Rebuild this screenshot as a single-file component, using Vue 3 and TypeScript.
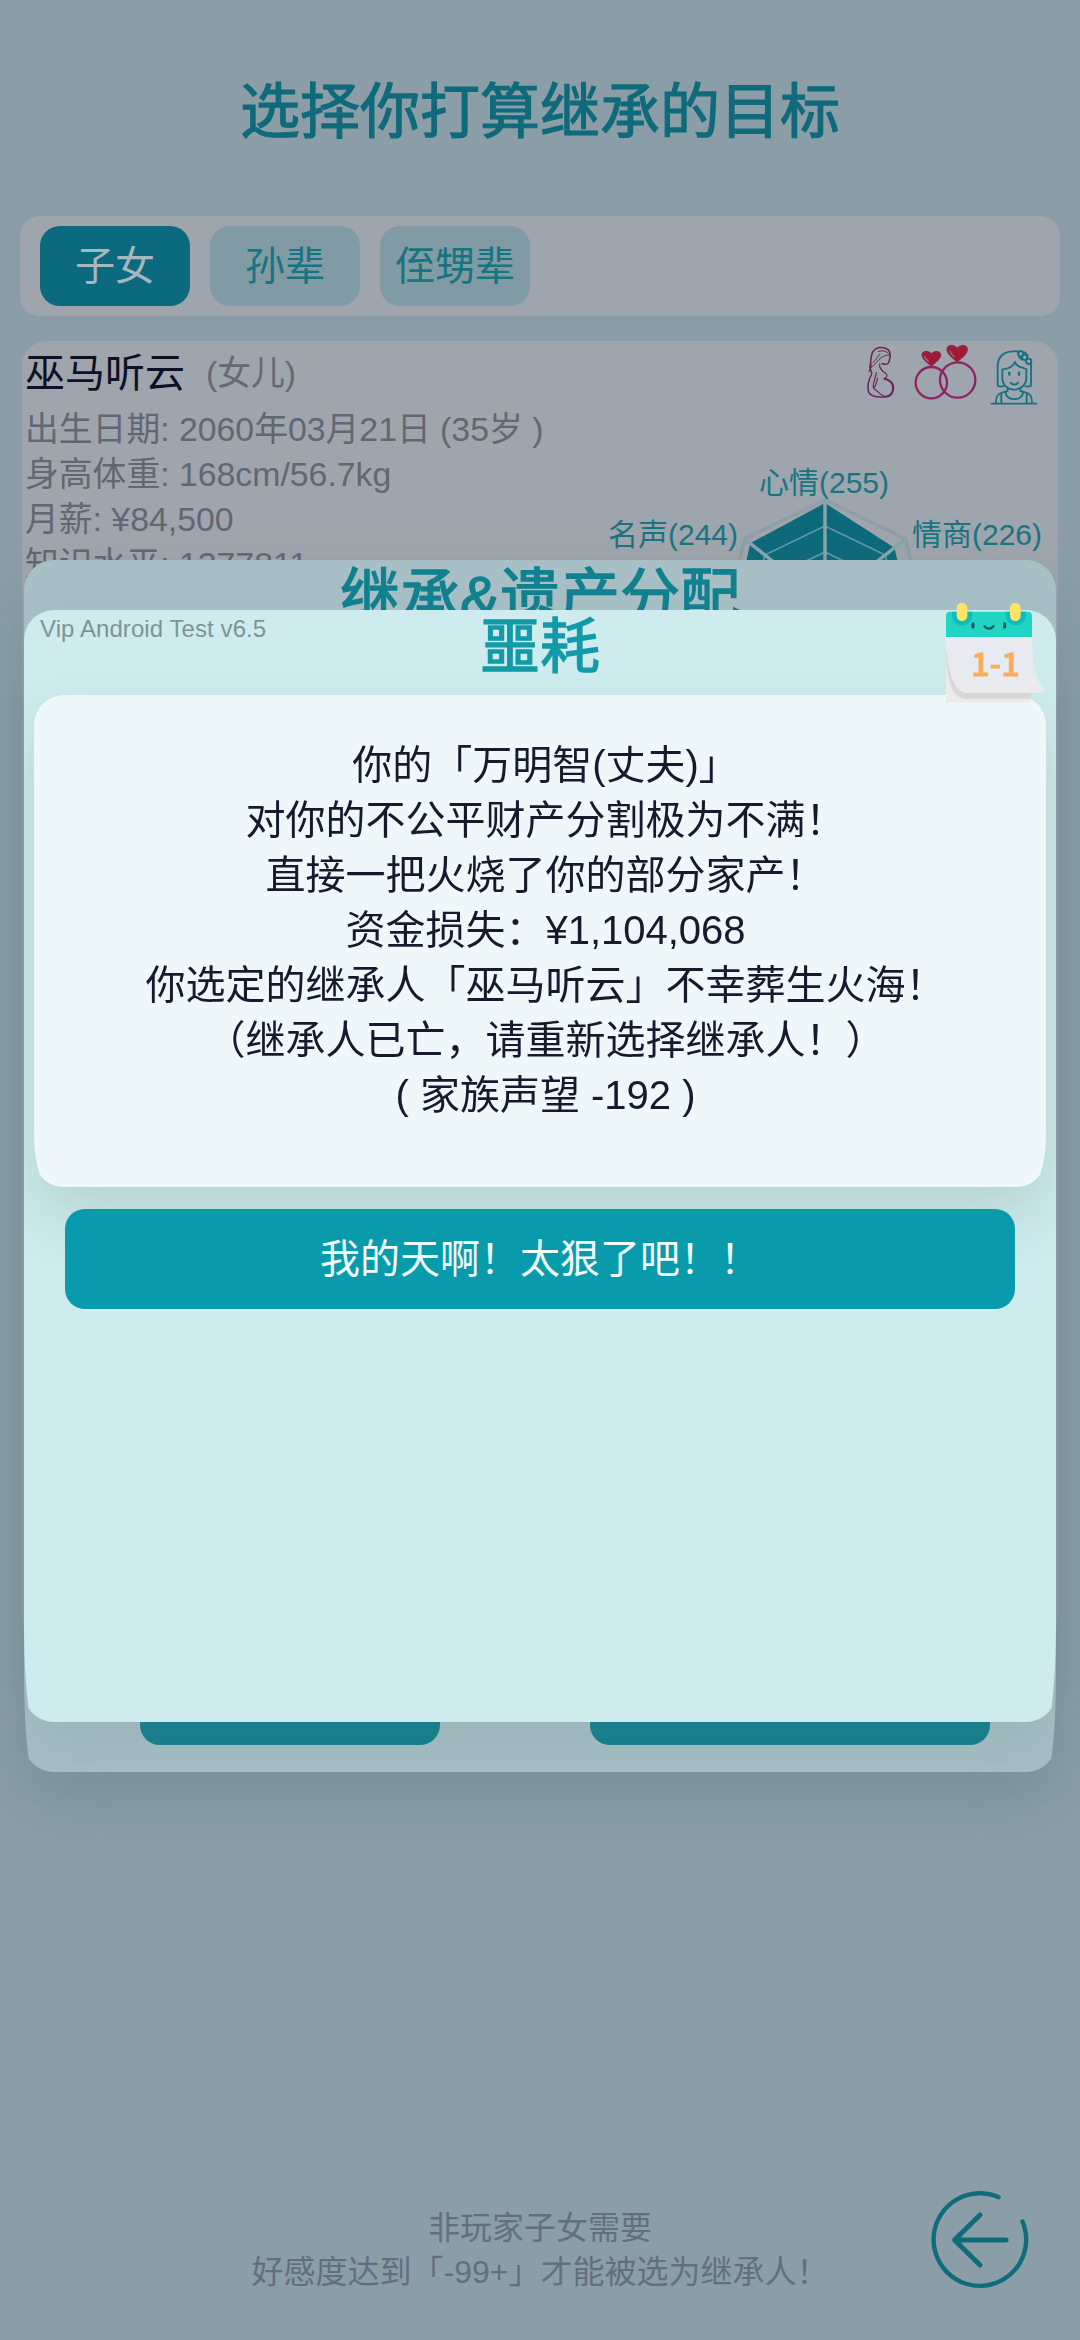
<script setup lang="ts">
interface Stat {
  label: string
  value: number
  x: number
  y: number
}

const tabs: string[] = ['子女', '孙辈', '侄甥辈']
const activeTab = 0

const facts: string[] = [
  '出生日期: 2060年03月21日 (35岁 )',
  '身高体重: 168cm/56.7kg',
  '月薪: ¥84,500',
  '知识水平: 1377811',
]

const message: string[] = [
  '你的「万明智(丈夫)」',
  '对你的不公平财产分割极为不满！',
  '直接一把火烧了你的部分家产！',
  '资金损失：¥1,104,068',
  '你选定的继承人「巫马听云」不幸葬生火海！',
  '（继承人已亡，请重新选择继承人！）',
  '( 家族声望 -192 )',
]

const radius = 103
const center = { x: 225, y: 143 }
const values: number[] = [255, 226, 230, 235, 230, 240, 244]
const stats: Stat[] = [
  { label: '心情', value: 255, x: 224, y: 33 },
  { label: '名声', value: 244, x: 73, y: 85 },
  { label: '情商', value: 226, x: 377, y: 85 },
]

function point(i: number, r: number): [number, number] {
  const a = (i * 2 * Math.PI) / 7
  return [center.x + r * Math.sin(a), center.y - r * Math.cos(a)]
}
function ring(r: number): string {
  return values.map((_, i) => point(i, r).map((n) => n.toFixed(1)).join(',')).join(' ')
}
const rings: string[] = [26, 51, 77].map(ring)
const outer = ring(radius)
const area = values
  .map((v, i) => point(i, (v / 255) * 100).map((n) => n.toFixed(1)).join(','))
  .join(' ')
const spokes = values.map((_, i) => point(i, radius))
</script>

<template>
  <div class="screen">
    <h1 class="page-title">选择你打算继承的目标</h1>

    <nav class="tabs">
      <button v-for="(t, i) in tabs" :key="t" class="tab" :class="{ active: i === activeTab }">{{ t }}</button>
    </nav>

    <section class="person-clip">
      <article class="person">
        <header class="person-head">
          <span class="name">巫马听云</span>
          <span class="relation">(女儿)</span>
        </header>
        <p v-for="f in facts" :key="f" class="fact">{{ f }}</p>

        <div class="badges">
          <svg width="30" height="54" viewBox="0 0 90 162" fill="none" stroke="#6b2156" stroke-width="4.5" stroke-linecap="round" stroke-linejoin="round">
            <path d="M17 53C8 70 25 73 19 87C11 101 7 122 11 139C20 154 42 154 61 152" />
            <path d="M18 64C15 47 18 33 22 20C32 2 54 0 69 11C77 18 76 29 75 36C72 41 74 47 70 51C66 58 58 55 51 53" />
            <path d="M72 28C57 26 43 37 35 49C28 60 16 59 12 77M40 16C57 12 64 16 73 25M24 50C34 42 37 31 45 24" stroke-width="3" />
            <path d="M44 54C42 66 51 75 62 82C69 87 65 96 58 98" stroke-width="3.5" />
            <path d="M58 98C76 101 88 115 84 132C81 144 75 152 60 152" stroke-width="6" />
            <path d="M34 80C31 98 23 112 25 126C35 132 42 145 55 149M27 124C35 119 34 107 38 96" stroke-width="3.5" />
          </svg>
          <svg class="rings" width="64" height="56" viewBox="0 0 192 168" fill="none">
            <circle cx="52" cy="113" r="47" stroke="#8f2363" stroke-width="7" />
            <circle cx="131" cy="105" r="53" stroke="#8f2363" stroke-width="7" />
            <path d="M52 62C39 51 27 43 25 32C23 18 43 16 52 29C61 16 81 18 79 32C77 43 65 51 52 62Z" fill="#a71830" stroke="#872653" stroke-width="5" />
            <path d="M130 49C115 36 102 28 100 15C99 0 120 -2 130 12C140 -2 160 0 159 15C157 28 145 36 130 49Z" fill="#a71830" stroke="#872653" stroke-width="5" />
            <path d="M31 33C33 41 38 45 44 50M107 17C110 26 115 31 121 36" stroke="#bd667d" stroke-width="3.500" />
          </svg>
          <svg width="48" height="56" viewBox="0 0 144 168" fill="none" stroke="#177180" stroke-width="5.5" stroke-linecap="round" stroke-linejoin="round">
            <path d="M4 161H139M18 158C18 139 23 131 38 127L53 123V114M126 158C126 139 121 131 106 127L91 123V114M34 158V130M110 158V130M47 127C47 154 99 154 99 127" />
            <path d="M40 109H27Q23 109 23 104V49C23 22 40 6 64 5C72 3 81 3 88 6M123 36V104Q123 109 117 109H106M37 58V84C37 105 53 119 72 119S109 105 109 84V57L88 50Q78 46 75 36C70 51 55 56 37 58Z" />
            <circle cx="92" cy="11" r="8" /><circle cx="104" cy="22" r="8" /><circle cx="116" cy="34" r="8" />
            <path d="M88 22L96 29M104 7L113 17" />
            <path d="M58 68V74M87 68V74" stroke-width="7" />
            <path d="M62 98C66 106 80 106 84 98" />
          </svg>
        </div>

        <svg class="radar" width="460" height="260" viewBox="0 0 460 260">
          <polygon :points="outer" fill="none" stroke="#909fa7" stroke-width="3.5" />
          <polygon :points="area" fill="#0d6a7a" />
          <polygon v-for="r in rings" :key="r" :points="r" fill="none" stroke="#5f98a2" stroke-width="1.8" />
          <line v-for="(s, i) in spokes" :key="i" :x1="center.x" :y1="center.y" :x2="s[0]" :y2="s[1]" stroke="#86a4ac" stroke-width="3.5" />
          <text v-for="s in stats" :key="s.label" :x="s.x" :y="s.y" text-anchor="middle">{{ s.label }}({{ s.value }})</text>
        </svg>
      </article>
    </section>

    <footer class="footer">
      <p>非玩家子女需要</p>
      <p>好感度达到「-99+」才能被选为继承人！</p>
      <svg class="back" width="104" height="104" viewBox="0 0 104 104" fill="none" stroke="#0f6c7c" stroke-width="4.4" stroke-linecap="round" stroke-linejoin="round">
        <path d="M70.5 9.2A46.3 46.3 0 1 0 94.5 33.5" />
        <path d="M52 27L26.5 52L52 77M27 52H78" stroke-width="5" />
      </svg>
    </footer>

    <div class="modal-shadow back-modal">
      <div class="modal">
        <h2 class="modal-title">继承&amp;遗产分配</h2>
        <div class="modal-actions">
          <span class="action small"></span>
          <span class="action large"></span>
        </div>
      </div>
    </div>

    <div class="modal-shadow front-modal">
      <div class="modal">
        <span class="version">Vip Android Test v6.5</span>
        <h2 class="modal-title">噩耗</h2>
        <div class="notice-shadow">
          <div class="notice">
            <p v-for="m in message" :key="m">{{ m }}</p>
          </div>
        </div>
        <button class="confirm">我的天啊！太狠了吧！！</button>
      </div>

      <svg class="calendar" width="130" height="130" viewBox="0 0 390 390">
        <defs>
          <radialGradient id="paper" cx="0.5" cy="0.4" r="0.6">
            <stop offset="0" stop-color="#e6eaf6" />
            <stop offset="1" stop-color="#ebebed" />
          </radialGradient>
        </defs>
        <path d="M48 210V338H304V300Z" fill="#ecebeb" />
        <path d="M48 190C50 255 62 326 105 326H304V300L60 190Z" fill="#d8d7d8" />
        <path d="M48 138H306C306 205 312 265 343 300Q342 309 330 309H112C65 309 48 220 48 138Z" fill="url(#paper)" />
        <path d="M48 141V77Q48 65 60 65H294Q306 65 306 77V141Z" fill="#20d6c2" />
        <path d="M66 65H127V76A30.500 30.500 0 0 1 66 76ZM227 65H288V76A30.500 30.500 0 0 1 227 76Z" fill="#12b9c0" />
        <rect x="80" y="38" width="32" height="55" rx="16" fill="#ffe467" />
        <rect x="240" y="38" width="32" height="55" rx="16" fill="#ffe467" />
        <path d="M129 101V111M224 101V111" stroke="#20525f" stroke-width="9" stroke-linecap="round" />
        <path d="M164 109C170 118 184 118 190 109" fill="none" stroke="#20525f" stroke-width="7" stroke-linecap="round" />
        <text x="196" y="258" text-anchor="middle">1-1</text>
      </svg>
    </div>
  </div>
</template>

<style>
body {
  margin: 0;
  background: #8b9ea7;
}
</style>

<style scoped>
.screen {
  position: relative;
  display: flex;
  flex-direction: column;
  box-sizing: border-box;
  width: 1080px;
  height: 2340px;
  overflow: hidden;
  background: #8b9ea7;
  font-family: 'Liberation Sans', 'Noto Sans CJK SC', sans-serif;
}
h1,
h2,
p {
  margin: 0;
  font-weight: 400;
}
button {
  padding: 0;
  border: 0;
  font: inherit;
}
.page-title {
  height: 136px;
  padding-top: 80px;
  font-size: 60px;
  line-height: 66px;
  text-align: center;
  color: #0f6a7b;
  -webkit-text-stroke: 1.2px #0f6a7b;
}
.tabs {
  display: flex;
  gap: 20px;
  flex: none;
  box-sizing: border-box;
  height: 100px;
  margin: 0 20px;
  padding: 10px 20px;
  border-radius: 20px;
  background: #9fa5ac;
}
.tab {
  width: 150px;
  height: 80px;
  border-radius: 20px;
  background: #809ba3;
  color: #177482;
  font-size: 40px;
  line-height: 80px;
}
.tab.active {
  background: #0b6a7d;
  color: #a8b6bf;
}
.person-clip {
  flex: none;
  height: 1300px;
  margin: 25px 22px 0;
  overflow: hidden;
  border-radius: 24px;
}
.person {
  position: relative;
  height: 1300px;
  margin: 0 -4px;
  padding-left: 7px;
  border-radius: 30px;
  background: #9fa5ac;
}
.person-head {
  display: flex;
  align-items: center;
  gap: 21px;
  height: 58px;
  padding-bottom: 8px;
}
.name {
  font-size: 40px;
  color: #0c1125;
}
.relation {
  font-size: 33.8px;
  color: #646a76;
}
.fact {
  font-size: 33.8px;
  line-height: 45px;
  color: #616873;
}
.badges {
  position: absolute;
  top: 5px;
  right: 24px;
  display: flex;
  align-items: flex-end;
  height: 60px;
}
.badges svg {
  overflow: visible;
}
.badges > svg:first-child {
  margin: 0 19px 6px 0;
}
.badges .rings {
  margin: 0 12px 5px 0;
}
.radar {
  position: absolute;
  left: 582px;
  top: 119px;
}
.radar text {
  font-size: 30px;
  fill: #1a7480;
}
.footer {
  position: absolute;
  left: 0;
  right: 0;
  top: 2206px;
  font-size: 32px;
  line-height: 44px;
  text-align: center;
  color: #646f7c;
}
.back {
  position: absolute;
  left: 928px;
  top: -18px;
}
.modal-shadow {
  position: absolute;
  left: 24px;
  width: 1032px;
  filter: drop-shadow(0 30px 30px rgba(70, 110, 110, 0.24));
}
.back-modal {
  top: 560px;
}
.front-modal {
  top: 610px;
  filter: drop-shadow(0 30px 30px rgba(70, 110, 110, 0.12));
}
.modal {
  position: relative;
  display: flex;
  flex-direction: column;
  height: 1112px;
  background: #ceeced;
  clip-path: path('M30 0H1002A30 30 0 0 1 1032 30V1010Q1032 1062 1027.500 1098A30 30 0 0 1 1002 1112H30A30 30 0 0 1 4.500 1098Q0 1062 0 1010V30A30 30 0 0 1 30 0Z');
}
.back-modal .modal {
  justify-content: space-between;
  height: 1212px;
  background: #a7bfc5;
  clip-path: path('M30 0H1002A30 30 0 0 1 1032 30V1110Q1032 1162 1027.500 1198A30 30 0 0 1 1002 1212H30A30 30 0 0 1 4.500 1198Q0 1162 0 1110V30A30 30 0 0 1 30 0Z');
}
.modal-title {
  flex: none;
  height: 85px;
  font-size: 60px;
  line-height: 76px;
  text-align: center;
  color: #129aa8;
  -webkit-text-stroke: 1.4px #129aa8;
}
.back-modal .modal-title {
  color: #12818f;
  -webkit-text-stroke-color: #12818f;
}
.modal-actions {
  display: flex;
  gap: 150px;
  padding: 0 66px 27px 116px;
}
.action {
  height: 80px;
  border-radius: 20px;
  background: #15808f;
}
.small {
  width: 300px;
}
.large {
  width: 400px;
}
.version {
  position: absolute;
  left: 16px;
  top: 4px;
  font-size: 24px;
  line-height: 30px;
  letter-spacing: 0.08px;
  color: #7f9397;
}
.notice-shadow {
  flex: none;
  margin: 0 10px;
  filter: drop-shadow(0 30px 30px rgba(110, 135, 130, 0.24));
}
.notice {
  box-sizing: border-box;
  height: 492px;
  padding: 43px 0 0 11px;
  background: #eef7f9;
  clip-path: path('M30 0H982A30 30 0 0 1 1012 30V438Q1012 462 1006.500 479A30 30 0 0 1 982 492H30A30 30 0 0 1 5.500 479Q0 462 0 438V30A30 30 0 0 1 30 0Z');
  font-size: 40px;
  line-height: 55px;
  text-align: center;
  color: #151a2d;
}
.confirm {
  position: relative;
  flex: none;
  height: 100px;
  margin: 22px 41px 0;
  border-radius: 20px;
  background: #099bac;
  color: #f2fbfc;
  font-size: 40px;
  line-height: 100px;
}
.calendar {
  position: absolute;
  left: 906px;
  top: -20px;
}
.calendar text {
  font-family: 'Noto Sans CJK SC', sans-serif;
  font-size: 98px;
  font-weight: 500;
  fill: #f8ad5b;
  stroke: #f8ad5b;
  stroke-width: 3px;
  stroke-linejoin: round;
}
</style>
